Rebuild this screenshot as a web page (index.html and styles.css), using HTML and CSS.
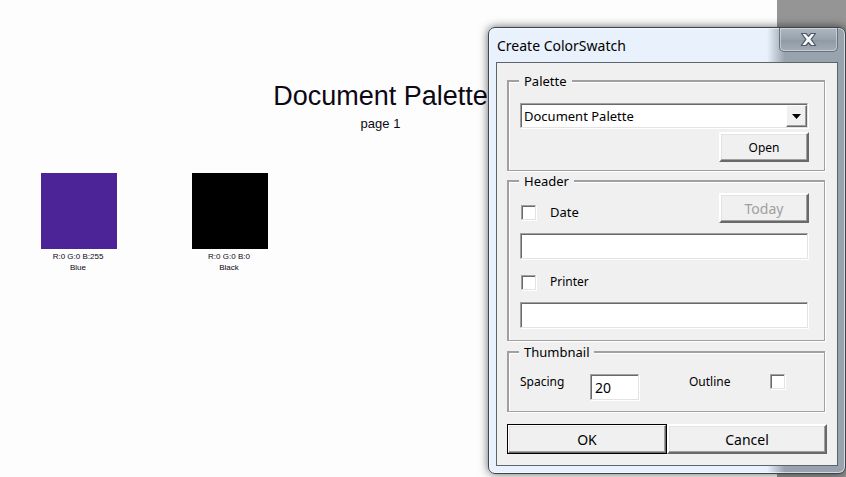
FILE: index.html
```html
<!DOCTYPE html>
<html lang="en">
<head>
  <meta charset="UTF-8">
  <meta name="viewport" content="width=device-width, initial-scale=1.0">
  <title>Create ColorSwatch</title>
  <link rel="stylesheet" href="styles.css">
</head>
<body>
  <main class="sheet">
    <h1>Document Palette</h1>
    <p class="page-number">page 1</p>
    <div class="swatches">
      <figure class="swatch">
        <div class="color blue"></div>
        <figcaption>R:0 G:0 B:255<br>Blue</figcaption>
      </figure>
      <figure class="swatch">
        <div class="color black"></div>
        <figcaption>R:0 G:0 B:0<br>Black</figcaption>
      </figure>
    </div>
  </main>
  <div class="pasteboard"></div>

  <form class="dialog">
    <div class="titlebar">
      <h2>Create ColorSwatch</h2>
      <button type="button" class="close" aria-label="Close">
        <svg width="17" height="15" viewBox="0 0 17 15">
          <path d="M1.5 1.500h4.500l2.500 2.800 2.500-2.800h4.500l-4.400 5.800 4.600 6.200h-4.700l-2.500-3-2.500 3H1.300l4.600-6.200z" fill="#f8f8f8" stroke="#50576a" stroke-width="1.200" stroke-linejoin="round"/>
        </svg>
      </button>
    </div>
    <div class="panel">
      <fieldset class="group">
        <legend>Palette</legend>
        <div class="combo">
          <select class="field" aria-label="Palette">
            <option>Document Palette</option>
          </select>
          <span class="arrow">
            <svg width="9" height="5" viewBox="0 0 9 5"><path d="M0 0h9L4.500 5z" fill="#000"/></svg>
          </span>
        </div>
        <button type="button" class="btn btn-small open">Open</button>
      </fieldset>

      <fieldset class="group header">
        <legend>Header</legend>
        <div class="row">
          <label class="check"><input type="checkbox"> Date</label>
          <button type="button" class="btn btn-small today" disabled>Today</button>
        </div>
        <input type="text" class="field" aria-label="Date text">
        <label class="check printer"><input type="checkbox"> Printer</label>
        <input type="text" class="field" aria-label="Printer text">
      </fieldset>

      <fieldset class="group thumbnail">
        <legend>Thumbnail</legend>
        <div class="options">
          <label for="spacing">Spacing</label>
          <input type="text" id="spacing" class="field" value="20">
          <label for="outline">Outline</label>
          <input type="checkbox" id="outline">
        </div>
      </fieldset>

      <div class="actions">
        <button type="button" class="btn ok">OK</button>
        <button type="button" class="btn">Cancel</button>
      </div>
    </div>
  </form>
</body>
</html>
```
FILE: styles.css
```css
* {
  box-sizing: border-box;
}
body {
  margin: 0;
  min-height: 100vh;
  display: flex;
  position: relative;
  overflow: hidden;
  background-color: #fdfdfd;
  font-family: "Liberation Sans", Arial, sans-serif;
  color: #0c0814;
}
.sheet {
  flex: 1;
  padding: 80px 16px 0 0;
}
.pasteboard {
  width: 69px;
  background-color: #959595;
}
h1 {
  margin: 0;
  font-size: 27px;
  font-weight: normal;
  line-height: 32px;
  text-align: center;
}
.page-number {
  margin: 3px 0 0;
  font-size: 13px;
  line-height: 18px;
  text-align: center;
}
.swatches {
  display: flex;
  gap: 75px;
  padding: 40px 0 0 41px;
}
.swatch {
  width: 76px;
  margin: 0;
}
.color {
  height: 76px;
}
.blue {
  background-color: #4d2498;
}
.black {
  background-color: #000;
}
figcaption {
  margin: 2px -10px 0 -12px;
  font-size: 8px;
  line-height: 11px;
  text-align: center;
}

/* dialog window */
.dialog {
  position: absolute;
  top: 27px;
  right: 0;
  width: 358px;
  padding: 0 7px 7px;
  border: 1px solid #3d444c;
  border-radius: 7px;
  background: linear-gradient(to left, #98a3ae 60px, #e8f1fc 78px);
  box-shadow: inset 0 0 0 1px rgba(255, 255, 255, 0.6), 0 0 10px rgba(0, 0, 0, 0.6);
  font-family: "Noto Sans", Tahoma, sans-serif;
  font-size: 13px;
  color: #000;
}
.titlebar {
  display: flex;
  justify-content: space-between;
  height: 34px;
}
h2 {
  margin: 0 0 0 1px;
  font-size: 14px;
  font-weight: normal;
  line-height: 35px;
}
.close {
  display: flex;
  align-items: center;
  justify-content: center;
  width: 59px;
  height: 24px;
  padding: 0;
  border: 1px solid #66717c;
  border-top: none;
  border-radius: 0 0 5px 5px;
  background: linear-gradient(#aeb7c0, #97a2ad 50%, #8d99a4 50%, #a2acb5);
  box-shadow: inset 0 0 0 1px rgba(255, 255, 255, 0.4);
}
.panel {
  padding: 10px 10px 11px;
  border: 1px solid #5b636b;
  background-color: #f0f0f0;
}

/* group boxes */
.group {
  min-width: 0;
  margin: 0 2px 0 0;
  padding: 14px 16px 8px 11px;
  border: solid #a0a0a0;
  border-width: 2px 1px 1px 2px;
  box-shadow: 1px 1px 0 #fff, inset 1px 1px 0 #fff;
}
.group + .group {
  margin-top: 2px;
}
legend {
  margin-left: -1px;
  padding: 0 5px;
  line-height: 16px;
  background-color: #f0f0f0;
}
.header {
  padding-top: 4px;
  padding-bottom: 12px;
}
.group + .thumbnail {
  margin-top: 3px;
  padding-bottom: 11px;
}

/* controls */
.field {
  display: block;
  width: 100%;
  height: 26px;
  margin: 0;
  padding: 0 4px;
  border: 1px solid;
  border-color: #a0a0a0 #e3e3e3 #e3e3e3 #a0a0a0;
  border-radius: 0;
  background-color: #fff;
  box-shadow: inset 1px 1px 0 #696969, 1px 1px 0 #fff;
  font: inherit;
  color: #000;
}
.combo {
  position: relative;
}
select.field {
  appearance: none;
  height: 25px;
  padding: 0 24px 0 3px;
}
.arrow {
  position: absolute;
  top: 2px;
  right: 1px;
  bottom: 1px;
  display: flex;
  align-items: center;
  justify-content: center;
  width: 21px;
  border: 1px solid;
  border-color: #fff #696969 #696969 #fff;
  background-color: #f0f0f0;
  box-shadow: inset -1px -1px 0 #a0a0a0;
  pointer-events: none;
}
.btn {
  height: 30px;
  padding: 0;
  border: 2px solid;
  border-color: #fff #696969 #696969 #fff;
  border-radius: 0;
  background-color: #f0f0f0;
  box-shadow: inset -1px -1px 0 #a0a0a0, inset 1px 1px 0 #e3e3e3;
  font: inherit;
  font-size: 14px;
  color: #000;
}
.btn-small {
  width: 90px;
  margin-right: -1px;
}
.open {
  display: block;
  margin-top: 4px;
  margin-left: auto;
  font-size: 12px;
}
.today:disabled {
  color: #a0a0a0;
}
input[type="checkbox"] {
  appearance: none;
  width: 15px;
  height: 15px;
  margin: 0;
  border: 1px solid;
  border-color: #a0a0a0 #e3e3e3 #e3e3e3 #a0a0a0;
  background-color: #fff;
  box-shadow: inset 1px 1px 0 #696969, 1px 1px 0 #fff;
}
.row {
  display: flex;
  align-items: flex-end;
  justify-content: space-between;
  margin-bottom: 10px;
}
.check {
  display: flex;
  align-items: center;
  gap: 14px;
  padding: 0 0 2px 1px;
  line-height: 18px;
}
.printer {
  padding: 14px 0 11px 1px;
  font-size: 12px;
}
.options {
  display: grid;
  grid-template-columns: 70px 99px 81px 1fr;
  align-items: start;
  font-size: 12px;
  line-height: 16px;
}
#spacing {
  width: 49px;
  font-size: 14px;
}
.actions {
  display: flex;
  margin-top: 12px;
}
.actions .btn {
  flex: 1;
}
.actions .ok {
  outline: 1px solid #000;
  outline-offset: -1px;
}
```
